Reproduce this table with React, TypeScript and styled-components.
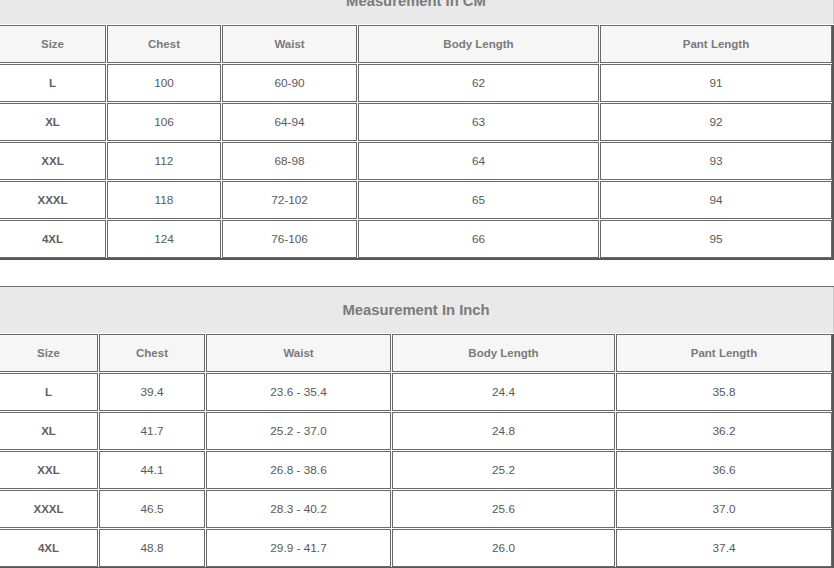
import React from "react";
import styled, { createGlobalStyle } from "styled-components";

const GlobalStyle = createGlobalStyle`
  html, body {
    margin: 0;
    padding: 0;
    background: #ffffff;
    overflow: hidden;
  }
  body {
    font-family: "Liberation Sans", Arial, sans-serif;
  }
  * { box-sizing: border-box; }
`;

const Page = styled.div`
  width: 836px;
  margin: -23px 0 0 -2px;
  display: flex;
  flex-direction: column;
  gap: 26px;
`;

const Panel = styled.section`
  display: flex;
  flex-direction: column;
  gap: 1px;
  border-top: 1px solid #747474;
  border-left: 1px solid #8a8a8a;
`;

const Title = styled.div`
  height: 46px;
  display: flex;
  align-items: center;
  justify-content: center;
  background: #e9e9e9;
  border-right: 1px solid #c9c9c9;
  color: #7b7b7b;
  font-weight: bold;
  font-size: 14.8px;
`;

const Grid = styled.div<{ $cols: string }>`
  display: grid;
  grid-template-columns: ${(p) => p.$cols};
  gap: 1px;
  border-right: 2px solid #585858;
  border-bottom: 2px solid #585858;
`;

const HeadCell = styled.div`
  height: 38px;
  display: flex;
  align-items: center;
  justify-content: center;
  border: 1px solid #6a6a6a;
  background: #f6f6f6;
  color: #7a7a7a;
  font-weight: bold;
  font-size: 11.5px;
`;

const Cell = styled.div<{ $strong?: boolean }>`
  height: 38px;
  display: flex;
  align-items: center;
  justify-content: center;
  border: 1px solid #6a6a6a;
  background: #ffffff;
  color: ${(p) => (p.$strong ? "#606060" : "#5a5a5a")};
  font-weight: ${(p) => (p.$strong ? "bold" : "normal")};
  font-size: ${(p) => (p.$strong ? "11.5px" : "11.8px")};
`;

const headers = ["Size", "Chest", "Waist", "Body Length", "Pant Length"];

const cmRows = [
  ["L", "100", "60-90", "62", "91"],
  ["XL", "106", "64-94", "63", "92"],
  ["XXL", "112", "68-98", "64", "93"],
  ["XXXL", "118", "72-102", "65", "94"],
  ["4XL", "124", "76-106", "66", "95"],
];

const inchRows = [
  ["L", "39.4", "23.6 - 35.4", "24.4", "35.8"],
  ["XL", "41.7", "25.2 - 37.0", "24.8", "36.2"],
  ["XXL", "44.1", "26.8 - 38.6", "25.2", "36.6"],
  ["XXXL", "46.5", "28.3 - 40.2", "25.6", "37.0"],
  ["4XL", "48.8", "29.9 - 41.7", "26.0", "37.4"],
];

function SizeTable({
  title,
  cols,
  rows,
}: {
  title: string;
  cols: string;
  rows: string[][];
}) {
  return (
    <Panel>
      <Title>{title}</Title>
      <Grid $cols={cols}>
        {headers.map((h) => (
          <HeadCell key={h}>{h}</HeadCell>
        ))}
        {rows.map((r) =>
          r.map((v, i) => (
            <Cell key={r[0] + i} $strong={i === 0}>
              {v}
            </Cell>
          ))
        )}
      </Grid>
    </Panel>
  );
}

export default function App() {
  return (
    <>
      <GlobalStyle />
      <Page>
        <SizeTable
          title="Measurement In CM"
          cols="107px 114px 135px 241px 232px"
          rows={cmRows}
        />
        <SizeTable
          title="Measurement In Inch"
          cols="99px 106px 185px 223px 216px"
          rows={inchRows}
        />
      </Page>
    </>
  );
}
